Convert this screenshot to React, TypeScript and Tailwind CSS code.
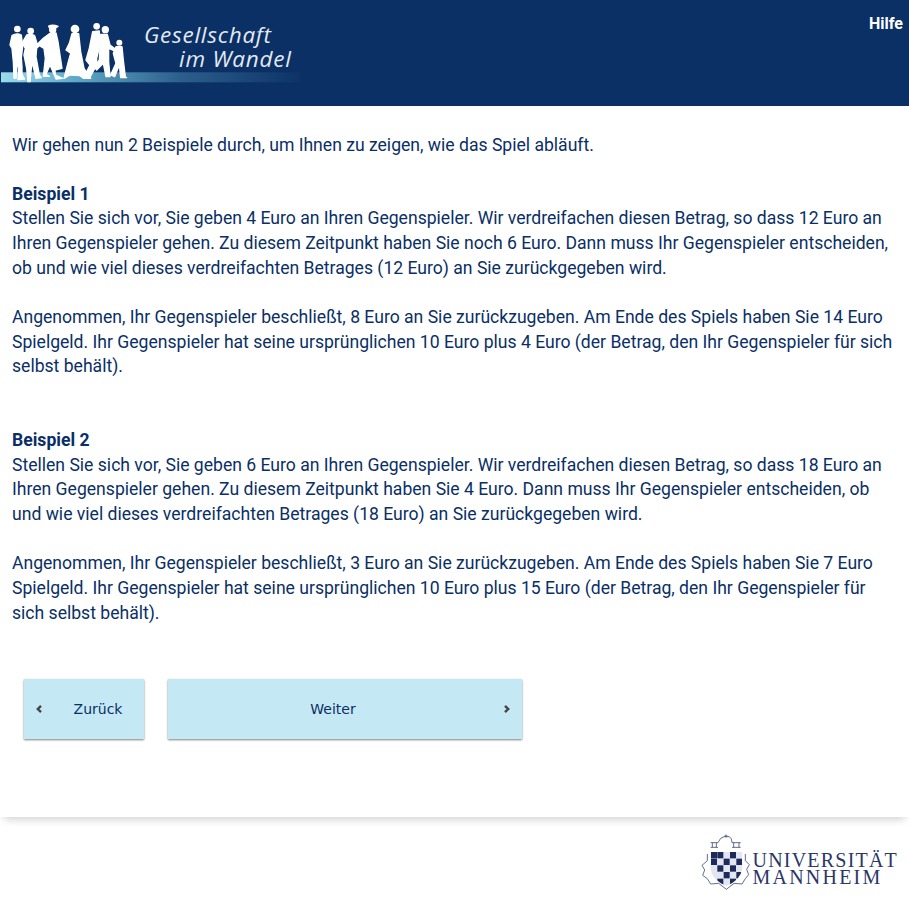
import * as React from 'react';

const navy = 'text-[#0a2f66]';

function Figures() {
  // walking group from the project logo, drawn at 3x and scaled down
  const heads = [
    [52, 42, 10], [92, 48, 10], [158, 44, 11], [225, 42, 13], [290, 34, 10], [316, 44, 11], [358, 83, 9],
  ];
  const bodies = [
    'M36 62 Q50 52 64 60 L68 95 L64 128 L66 155 L66 178 L74 192 L54 194 L56 160 L52 140 L48 190 L42 190 L40 140 L36 100 L30 90 Z',
    'M80 60 Q92 56 104 62 L112 88 L126 84 L110 100 L108 125 L118 180 L124 188 L108 190 L96 140 L90 200 L84 200 L80 160 L72 120 L76 100 L66 84 Z',
    'M146 33 Q158 27 174 34 L168 38 L148 38 Z M148 56 L168 54 L174 80 L186 160 L165 165 L166 180 L188 190 L168 192 L150 150 L138 178 L148 184 L130 184 L136 130 L132 100 L112 88 L130 70 Z',
    'M216 56 L236 56 L242 110 L252 160 L272 190 L250 190 L240 182 L210 180 L192 190 L205 140 L212 115 L198 105 L208 85 Z',
    'M278 50 L298 48 L300 90 L290 130 L290 150 L268 190 L255 180 L270 150 L258 135 L268 100 Z',
    'M302 58 L322 58 L330 90 L346 102 L344 108 L326 100 L326 140 L330 185 L318 185 L310 145 L290 165 L282 155 L298 135 Z',
    'M348 95 L366 95 L370 135 L376 185 L380 188 L362 188 L358 150 L344 185 L332 180 L348 145 L340 115 Z',
  ];
  return (
    <svg width="300" height="106" viewBox="0 0 300 106" className="block">
      <defs>
        <linearGradient id="strip" x1="0" x2="1" y1="0" y2="0">
          <stop offset="0" stopColor="#9adcec" />
          <stop offset="0.25" stopColor="#5fa9c6" />
          <stop offset="0.6" stopColor="#2c5f8c" />
          <stop offset="1" stopColor="#0d3367" />
        </linearGradient>
        <filter id="soft" x="-5%" y="-5%" width="110%" height="110%">
          <feGaussianBlur stdDeviation="0.9" />
        </filter>
      </defs>
      <rect x="1" y="72.3" width="299" height="10" fill="url(#strip)" />
      <g transform="translate(0 15) scale(0.3333)" fill="#fff" stroke="#fff" strokeWidth="4" strokeLinejoin="round" filter="url(#soft)">
        {heads.map(([x, y, r], i) => (
          <circle key={i} cx={x} cy={y} r={r} stroke="none" />
        ))}
        {bodies.map((d, i) => (
          <path key={i} d={d} />
        ))}
      </g>
    </svg>
  );
}

function Crest() {
  const cells = [
    [0, 0], [1, 0], [3, 0], [0, 1], [2, 1], [4, 1], [1, 2], [3, 2], [2, 3], [4, 3], [1, 4], [3, 4],
  ];
  return (
    <svg width="52" height="65" viewBox="0 0 156 195" className="block shrink-0">
      <defs>
        <clipPath id="shield">
          <path d="M38 66 H132 V118 Q128 150 85 168 Q42 150 38 118 Z" />
        </clipPath>
      </defs>
      <g fill="none" stroke="#4a5680" strokeWidth="2.6">
        <path d="M38 38 H60 M43 38 V52 M55 38 V52 M38 52 H60" />
        <path d="M102 38 H128 M107 38 V52 M123 38 V52 M102 52 H128" />
        <path d="M60 38 Q66 22 78 20 H94 Q102 24 102 38" />
        <circle cx="84" cy="18" r="3" />
        <path d="M28 72 V92 L12 106 L20 120 L14 136 L28 146 L38 162 L62 160 L85 178 L108 160 L132 162 L142 146 L152 134 L146 118 L154 104 L142 92 V72" />
      </g>
      <path d="M38 66 H132 V118 Q128 150 85 168 Q42 150 38 118 Z" fill="#e3e6ee" />
      <g clipPath="url(#shield)">
        {cells.map(([c, r], i) => (
          <rect key={i} x={39 + c * 19} y={66 + r * 20} width="18" height="19" fill="#1d2b5c" />
        ))}
      </g>
    </svg>
  );
}

export default function App() {
  return (
    <div className={`min-h-[903px] bg-white ${navy} font-['Roboto',sans-serif]`}>
      <header className="relative h-[106px] bg-[#0a3065]">
        <Figures />
        <div className="absolute left-[144px] top-[23px] font-['Open_Sans',sans-serif] text-[22.5px] italic leading-[24px] tracking-[0.75px] text-[#e4e9f0]">
          <div>Gesellschaft</div>
          <div className="pl-[35px]">im Wandel</div>
        </div>
        <a className="absolute right-[6px] top-[12px] text-[16px] font-bold text-white">Hilfe</a>
      </header>

      <main className="px-3 pt-[26.5px] text-[17.6px] leading-[24.64px] tracking-[-0.01px]">
        <p>Wir gehen nun 2 Beispiele durch, um Ihnen zu zeigen, wie das Spiel abläuft.</p>
        <p className="mt-[24.64px] font-bold">Beispiel 1</p>
        <p>
          Stellen Sie sich vor, Sie geben 4 Euro an Ihren Gegenspieler. Wir verdreifachen diesen Betrag, so dass 12 Euro an Ihren Gegenspieler gehen. Zu diesem Zeitpunkt haben Sie noch 6 Euro. Dann muss Ihr Gegenspieler entscheiden, ob und wie viel dieses verdreifachten Betrages (12 Euro) an Sie zurückgegeben wird.
        </p>
        <p className="mt-[24.64px]">
          Angenommen, Ihr Gegenspieler beschließt, 8 Euro an Sie zurückzugeben. Am Ende des Spiels haben Sie 14 Euro Spielgeld. Ihr Gegenspieler hat seine ursprünglichen 10 Euro plus 4 Euro (der Betrag, den Ihr Gegenspieler für sich selbst behält).
        </p>
        <p className="mt-[49.28px] font-bold">Beispiel 2</p>
        <p>
          Stellen Sie sich vor, Sie geben 6 Euro an Ihren Gegenspieler. Wir verdreifachen diesen Betrag, so dass 18 Euro an Ihren Gegenspieler gehen. Zu diesem Zeitpunkt haben Sie 4 Euro. Dann muss Ihr Gegenspieler entscheiden, ob und wie viel dieses verdreifachten Betrages (18 Euro) an Sie zurückgegeben wird.
        </p>
        <p className="mt-[24.64px]">
          Angenommen, Ihr Gegenspieler beschließt, 3 Euro an Sie zurückzugeben. Am Ende des Spiels haben Sie 7 Euro Spielgeld. Ihr Gegenspieler hat seine ursprünglichen 10 Euro plus 15 Euro (der Betrag, den Ihr Gegenspieler für sich selbst behält).
        </p>
      </main>

      <div className="mt-[54px] flex gap-6 px-6 font-['DejaVu_Sans',sans-serif] text-[14px]">
        <button className="relative flex h-[60px] w-[120px] items-center justify-center bg-[#c5e8f5] pl-[28px] shadow-[0_1px_2px_rgba(0,0,0,0.5)]">
          <span className="absolute left-[11px] text-[#444]">
            <svg width="8" height="10" viewBox="0 0 8 10" className="block"><path d="M6 1.8 L2.8 5 L6 8.2" fill="none" stroke="currentColor" strokeWidth="2.4" /></svg>
          </span>
          <span>Zurück</span>
        </button>
        <button className="relative flex h-[60px] w-[354px] items-center justify-center bg-[#c5e8f5] pr-[24px] shadow-[0_1px_2px_rgba(0,0,0,0.5)]">
          <span>Weiter</span>
          <span className="absolute right-[11px] text-[#444]">
            <svg width="8" height="10" viewBox="0 0 8 10" className="block"><path d="M2 1.8 L5.2 5 L2 8.2" fill="none" stroke="currentColor" strokeWidth="2.4" /></svg>
          </span>
        </button>
      </div>

      <footer className="mt-[78px]">
        <div className="h-[10px] overflow-hidden">
          <div className="mx-[4px] -mt-[10px] h-[10px] shadow-[0_2px_8px_rgba(0,0,0,0.2)]" />
        </div>
        <div className="flex justify-end gap-[3px] pr-[11px] pt-[3px] text-[#2a3768]">
          <Crest />
          <div className="pt-[22px] font-['Liberation_Serif',serif] text-[20px] leading-[17px] tracking-[1.2px]">
            <div>UNIVERSITÄT</div>
            <div className="tracking-[2.2px]">MANNHEIM</div>
          </div>
        </div>
      </footer>
    </div>
  );
}
